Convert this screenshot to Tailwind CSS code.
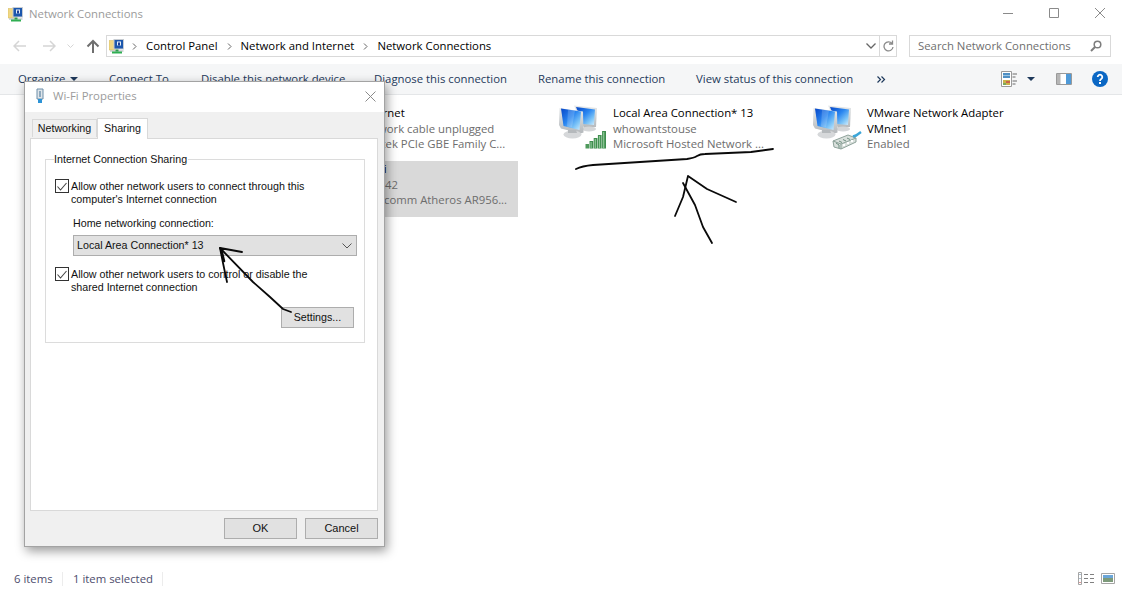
<!DOCTYPE html>
<html>
<head>
<meta charset="utf-8">
<script src="https://cdn.jsdelivr.net/npm/@tailwindcss/browser@4"></script>
</head>
<body class="bg-white">
<svg width="0" height="0" class="absolute">
  <defs>
    <linearGradient id="scr" x1="0" y1="0" x2="1" y2="1"><stop offset="0" stop-color="#0646c8"/><stop offset="0.45" stop-color="#2a86f0"/><stop offset="0.75" stop-color="#7cc4f7"/><stop offset="1" stop-color="#d5eefc"/></linearGradient>
    <linearGradient id="frm" x1="0" y1="0" x2="0" y2="1"><stop offset="0" stop-color="#e6e9eb"/><stop offset="1" stop-color="#b4b8bb"/></linearGradient>
    <symbol id="pcs" viewBox="0 0 56 52">
      <path d="M18 5.500L41 8l-1 19-12 1z" fill="url(#frm)"/>
      <path d="M20 7l19 2.500-1 15.500-11-1z" fill="url(#scr)"/>
      <ellipse cx="33" cy="29" rx="7" ry="2.500" fill="#d4d6d8"/>
      <path d="M3.500 8L27 11.500l.5 21-3 1L5 28.500 3 25z" fill="url(#frm)"/>
      <path d="M5 8.500l20 3-1.500 18.500-16-4z" fill="url(#scr)"/>
      <path d="M12 9.500l7 1-3 17-5-1z" fill="#fff" opacity=".18"/>
      <ellipse cx="16.500" cy="34.500" rx="9" ry="4" fill="#d6d8da"/>
      <path d="M12 30h8l1 3h-9z" fill="#b5b9bc"/>
    </symbol>
    <symbol id="net" viewBox="0 0 16 16">
      <path d="M.5 .5h10v15H.5z" fill="#fff" stroke="#9a9a9a"/>
      <path d="M2 2h7v5H2z" fill="#4f8fc4"/><path d="M2 4h7v1H2z" fill="#9cc4e0"/>
      <path d="M2 9h7v5H2z" fill="#c9b24a"/><path d="M2 12h3v2H2z" fill="#7da85b"/><path d="M5 10h4v2H5z" fill="#c8644a"/>
      <path d="M11.500 3h4.500M11.500 6h3M11.500 10h4.500M11.500 13h3" stroke="#6a6a6a"/>
    </symbol>
    <symbol id="cpl" viewBox="0 0 16 16">
      <path d="M0 2.500h5l1-1.500v11H0z" fill="#f0d784" stroke="#d3b658" stroke-width=".5"/>
      <path d="M4.500 1h10.500v10.500H4.500z" fill="#c7ccd2"/>
      <path d="M5.500 2h8.500v8.500H5.500z" fill="#1c57ad"/>
      <path d="M8 3.500h4v4H8z" fill="#e3edf8"/><path d="M9 4.500h2v3H9z" fill="#1c3f95"/>
      <path d="M1 12.500h13.500v1H1z" fill="#a9aeb2"/>
      <path d="M6.500 11.500h3v2h-3z" fill="#2f9a4c"/><path d="M3 13.500h10v2H3z" fill="#2fae52"/>
    </symbol>
  </defs>
</svg>

<div class="relative w-[1122px] h-[590px] overflow-hidden flex flex-col font-['Open_Sans','Noto_Sans',sans-serif] text-[11.35px] text-black">

  <!-- title bar -->
  <div class="h-[30px] flex items-center pl-[8px] pb-[2px] shrink-0">
    <svg class="w-[16px] h-[16px]"><use href="#cpl"/></svg>
    <span class="ml-[5px] text-[#9b9b9b]">Network Connections</span>
    <div class="ml-auto mr-[-1px] flex items-start h-[30px] mb-[-2px]">
      <svg class="w-[46px] h-[30px] text-[#8a8a8a] ml-[1px]" viewBox="0 0 46 30" fill="none" stroke="currentColor"><path d="M18 13.500h10"/></svg>
      <svg class="w-[46px] h-[30px] text-[#8a8a8a]" viewBox="0 0 46 30" fill="none" stroke="currentColor"><path d="M18.500 8.500h9v9h-9z"/></svg>
      <svg class="w-[46px] h-[30px] text-[#8a8a8a]" viewBox="0 0 46 30" fill="none" stroke="currentColor"><path d="M18 8l10 10M28 8L18 18"/></svg>
    </div>
  </div>

  <!-- address row -->
  <div class="h-[34px] flex items-center pb-[2px] shrink-0">
    <div class="w-[106px] h-full flex items-center pl-[13px] shrink-0">
      <svg class="w-[14px] h-[12px] text-[#d5d5d5]" viewBox="0 0 14 12" fill="none" stroke="currentColor" stroke-width="1.500"><path d="M13 6H1M6 1L1 6l5 5"/></svg>
      <svg class="w-[14px] h-[12px] ml-[15px] text-[#d5d5d5]" viewBox="0 0 14 12" fill="none" stroke="currentColor" stroke-width="1.500"><path d="M1 6h12M8 1l5 5-5 5"/></svg>
      <svg class="w-[7px] h-[5px] ml-[11px] text-[#d5d5d5]" viewBox="0 0 7 5" fill="none" stroke="currentColor"><path d="M.5 .5l3 3 3-3"/></svg>
      <svg class="w-[14px] h-[14px] ml-[12px] text-[#6f6f6f]" viewBox="0 0 14 14" fill="none" stroke="currentColor" stroke-width="2"><path d="M7 14V2M1.500 7.500L7 2l5.500 5.500"/></svg>
    </div>
    <div class="w-[791px] h-[22px] border border-[#d9d9d9] flex items-center shrink-0">
      <svg class="w-[16px] h-[16px] ml-[2px]"><use href="#cpl"/></svg>
      <svg class="w-[5px] h-[7px] ml-[7px] text-[#666]" viewBox="0 0 5 7" fill="none" stroke="currentColor"><path d="M1 .5l3 3-3 3"/></svg>
      <span class="ml-[9px]">Control Panel</span>
      <svg class="w-[5px] h-[7px] ml-[9px] text-[#666]" viewBox="0 0 5 7" fill="none" stroke="currentColor"><path d="M1 .5l3 3-3 3"/></svg>
      <span class="ml-[9px]">Network and Internet</span>
      <svg class="w-[5px] h-[7px] ml-[9px] text-[#666]" viewBox="0 0 5 7" fill="none" stroke="currentColor"><path d="M1 .5l3 3-3 3"/></svg>
      <span class="ml-[9px]">Network Connections</span>
      <svg class="w-[10px] h-[6px] ml-auto mr-[3px] text-[#666]" viewBox="0 0 10 6" fill="none" stroke="currentColor" stroke-width="1.300"><path d="M.5 .5L5 5 9.500 .5"/></svg>
      <div class="w-[17px] h-full border-l border-[#d9d9d9] flex items-center justify-center">
        <svg class="w-[11px] h-[12px] text-[#8a8a8a]" viewBox="0 0 11 12" fill="none" stroke="currentColor" stroke-width="1.300"><path d="M9 3.500A4.500 4.500 0 1 0 10 7M9.500 .5v3.500H6"/></svg>
      </div>
    </div>
    <div class="ml-[12px] w-[202px] h-[22px] border border-[#d9d9d9] flex items-center pl-[8px] pr-[8px] shrink-0 text-[#6f6f6f]">
      <span>Search Network Connections</span>
      <svg class="w-[12px] h-[12px] ml-auto text-[#7d7d7d]" viewBox="0 0 12 12" fill="none" stroke="currentColor" stroke-width="1.500"><circle cx="7.500" cy="4.500" r="3.300"/><path d="M5 7l-4 4" stroke-width="2"/></svg>
    </div>
  </div>

  <!-- command bar -->
  <div class="h-[31px] bg-[#f5f6f7] border-b border-[#e4e6e8] flex items-center shrink-0 text-[#1e395b]">
    <span class="ml-[18px] w-[91px] flex items-center gap-[5px]">Organize <svg class="w-[8px] h-[4px]" viewBox="0 0 8 4"><path d="M0 0h8L4 4z" fill="#1e395b"/></svg></span>
    <span class="w-[92px]">Connect To</span>
    <span class="w-[173px]">Disable this network device</span>
    <span class="w-[164px]">Diagnose this connection</span>
    <span class="w-[158px]">Rename this connection</span>
    <span class="w-[181px]">View status of this connection</span>
    <svg class="w-[9px] h-[7px]" viewBox="0 0 9 7" fill="none" stroke="#1e395b" stroke-width="1.200"><path d="M.5 .5l3 3-3 3M4.500 .5l3 3-3 3"/></svg>
    <svg class="w-[16px] h-[16px] ml-[115px]"><use href="#net"/></svg>
    <svg class="w-[8px] h-[4px] ml-[10px]" viewBox="0 0 8 4"><path d="M0 0h8L4 4z" fill="#1e395b"/></svg>
    <svg class="w-[16px] h-[12px] ml-[21px]" viewBox="0 0 16 12"><path d="M.5 .5h15v11H.5z" fill="#fff" stroke="#9a9a9a"/><path d="M1 1h3.500v10H1z" fill="#b5b5b5"/><path d="M10 1h5v10h-5z" fill="#4f9ad8"/></svg>
    <svg class="w-[16px] h-[16px] ml-[20px]" viewBox="0 0 16 16"><circle cx="8" cy="8" r="8" fill="#0a67c4"/><path d="M5.700 6a2.300 2.300 0 1 1 3.500 2c-.8.500-1.200.9-1.200 2" fill="none" stroke="#fff" stroke-width="1.800"/><path d="M7 11h2v2H7z" fill="#fff"/></svg>
  </div>

  <!-- items -->
  <div class="flex-1 pl-[305px] pt-[10px] grid grid-cols-[254px_254px_254px] auto-rows-[56px] content-start text-[#6d6d6d] leading-[15.500px]">
    <div class="flex pl-[54px]">
      <div><div class="text-black">Ethernet</div><div>Network cable unplugged</div><div>Realtek PCIe GBE Family C...</div></div>
    </div>
    <div class="flex">
      <div class="relative w-[54px] h-[50px] shrink-0">
        <svg class="absolute left-[-3px] top-[-5px] w-[56px] h-[52px]"><use href="#pcs"/></svg>
        <svg class="absolute left-[-3px] top-[-5px] w-[56px] h-[52px]" viewBox="0 0 56 52"><path d="M29.500 44h3.500v4.500h-3.500z" fill="#4f9a5c"/><path d="M33.500 41h3.700v7.500h-3.700zM37.700 38h3.700v10.500h-3.700zM41.900 35h3.700v13.500h-3.700zM46.100 31h3.900v17.500h-3.900z" fill="#3f8d4e"/><path d="M34.500 42h1.200v6h-1.200zM38.700 39h1.200v9h-1.200zM42.900 36h1.200v12h-1.200zM47.100 32h1.200v16h-1.200z" fill="#8cc896"/></svg>
      </div>
      <div><div class="text-black">Local Area Connection* 13</div><div>whowantstouse</div><div>Microsoft Hosted Network ...</div></div>
    </div>
    <div class="flex">
      <div class="relative w-[54px] h-[50px] shrink-0">
        <svg class="absolute left-[-3px] top-[-5px] w-[56px] h-[52px]"><use href="#pcs"/></svg>
        <svg class="absolute left-[-3px] top-[-5px] w-[56px] h-[52px]" viewBox="0 0 56 52"><path d="M23 41l15-6 8 3v4l-15 7-7-2z" fill="#d9e0dc" stroke="#8ea29a"/><path d="M23 41l8 3 15-6M31 44v5" fill="none" stroke="#8ea29a"/><path d="M26 43l3 2v3M29 41l3 1.500M33 39.500l3 1.500M37 38l3 1.500" fill="none" stroke="#6f8f80"/><path d="M33 44h2v2h-2zM37 42h2v2h-2zM41 40h2v2h-2z" fill="#fff"/><path d="M43 36.500l3-1 5-3.500" fill="none" stroke="#3da6d8" stroke-width="2.500"/></svg>
      </div>
      <div class="w-[150px]"><div class="text-black">VMware Network Adapter VMnet1</div><div>Enabled</div></div>
    </div>
    <div class="bg-[#d9d9d9] w-[213px] flex pl-[54px]">
      <div><div class="text-black tracking-[0.5px]">Wi-Fi</div><div>HP-A42</div><div>Qualcomm Atheros AR956...</div></div>
    </div>
  </div>

  <!-- status -->
  <div class="h-[23px] flex items-center pl-[14px] shrink-0 text-[#4d4d6d]">
    <span class="w-[48px]">6 items</span>
    <span class="w-px h-[14px] bg-[#ececec]"></span>
    <span class="ml-[10px] w-[89px]">1 item selected</span>
    <span class="w-px h-[14px] bg-[#ececec]"></span>
    <svg class="ml-auto w-[17px] h-[13px]" viewBox="0 0 17 13"><path d="M.5 .5h3v12h-3z" fill="#fff" stroke="#a5a5a5"/><path d="M1.500 2h1v1h-1zM1.500 6h1v1h-1z" fill="#5b7f9f"/><path d="M1.500 10h1v1h-1z" fill="#c03030"/><path d="M6 2.500h4M12 2.500h4M6 6.500h4M12 6.500h4M6 10.500h4M12 10.500h4" stroke="#808080"/></svg>
    <svg class="ml-[6px] mr-[7px] w-[14px] h-[11px]" viewBox="0 0 14 11"><path d="M.5 .5h13v10H.5z" fill="#fff" stroke="#a5a5a5" stroke-width="1"/><path d="M2 2h10v3H2z" fill="#6aa5d8"/><path d="M2 5h10v4H2z" fill="#7d9a7a"/></svg>
  </div>

  <!-- dialog -->
  <div class="absolute left-[24px] top-[81px] w-[361px] h-[466px] bg-[#f0f0f0] border border-[#a3a3a3] shadow-[2px_4px_10px_rgba(0,0,0,0.4)] flex flex-col font-['Liberation_Sans',sans-serif] text-[10.7px] text-[#111]">
    <div class="h-[30px] bg-white flex items-center pl-[9px] pr-[8px] pb-[2px] shrink-0 font-['Open_Sans',sans-serif] text-[11.35px]">
      <svg class="w-[12px] h-[16px]" viewBox="0 0 12 16"><path d="M3 1h6v10H3z" fill="#dfe5ea" stroke="#6d8ea8"/><path d="M5 3h2v6H5z" fill="#8fa9bd"/><path d="M4 11h4v4H4z" fill="#2d93d6"/></svg>
      <span class="ml-[7px] text-[#9b9b9b]">Wi-Fi Properties</span>
      <svg class="ml-auto w-[11px] h-[11px] text-[#8a8a8a]" viewBox="0 0 11 11" fill="none" stroke="currentColor"><path d="M.5 .5l10 10M10.500 .5l-10 10"/></svg>
    </div>
    <div class="flex items-end pl-[7px] h-[26px] shrink-0 relative z-10">
      <div class="w-[65px] h-[18px] bg-[#f0f0f0] border border-b-0 border-[#d9d9d9] flex items-center justify-center mb-px">Networking</div>
      <div class="w-[51px] h-[21px] bg-white border border-b-0 border-[#d9d9d9] flex items-center justify-center -mb-px pb-[2px]">Sharing</div>
    </div>
    <div class="mx-[5px] w-[348px] h-[373px] bg-white border border-[#d9d9d9] pl-[14px] pt-[14px] shrink-0">
      <fieldset class="w-[320px] h-[190px] border border-[#dcdcdc]">
        <legend class="ml-[8px] pr-[1px] leading-[12px] -mt-[1px]">Internet Connection Sharing</legend>
        <label class="flex ml-[9px] mt-[15px]">
          <span class="w-[14px] h-[14px] border border-[#333] flex items-center justify-center shrink-0 mt-[-1px]"><svg class="w-[10px] h-[9px]" viewBox="0 0 10 9" fill="none" stroke="#444" stroke-width="1.100"><path d="M.5 4.500L3.500 8 9.500 1"/></svg></span>
          <span class="ml-[2px] leading-[13px] w-[270px]">Allow other network users to connect through this computer's Internet connection</span>
        </label>
        <div class="ml-[27px] mt-[11px] leading-[13px]">Home networking connection:</div>
        <div class="ml-[27px] mt-[5px] w-[284px] h-[21px] bg-[#e1e1e1] border border-[#adadad] flex items-center pl-[3px] pr-[4px]">
          <span>Local Area Connection* 13</span>
          <svg class="ml-auto w-[10px] h-[6px] text-[#555]" viewBox="0 0 10 6" fill="none" stroke="currentColor"><path d="M.5 .5L5 5 9.500 .5"/></svg>
        </div>
        <label class="flex ml-[9px] mt-[12px]">
          <span class="w-[14px] h-[14px] border border-[#333] flex items-center justify-center shrink-0 mt-[-1px]"><svg class="w-[10px] h-[9px]" viewBox="0 0 10 9" fill="none" stroke="#444" stroke-width="1.100"><path d="M.5 4.500L3.500 8 9.500 1"/></svg></span>
          <span class="ml-[2px] leading-[13px] w-[270px]">Allow other network users to control or disable the shared Internet connection</span>
        </label>
        <div class="flex justify-end mr-[10px] mt-[13px]">
          <button class="w-[73px] h-[21px] bg-[#e1e1e1] border border-[#adadad]">Settings...</button>
        </div>
      </fieldset>
    </div>
    <div class="flex justify-end gap-[8px] pr-[6px] pt-[7px]">
      <button class="w-[73px] h-[21px] bg-[#e1e1e1] border border-[#adadad] text-[11px]">OK</button>
      <button class="w-[73px] h-[21px] bg-[#e1e1e1] border border-[#adadad] text-[11px]">Cancel</button>
    </div>
  </div>

  <!-- hand-drawn annotations -->
  <svg class="absolute left-0 top-0 w-[1122px] h-[590px] pointer-events-none" viewBox="0 0 1122 590" fill="none" stroke="#0a0a0a" stroke-width="1.800" stroke-linecap="round" stroke-linejoin="round">
    <path d="M576 169q6-3 17-4l47-3 47-3q7-1 10-3t8-2l46-2 22-3"/>
    <path d="M675 216l8-19 5-21 19 13 29 13"/>
    <path d="M683 183l12 22 8 22 9 16"/>
    <path d="M291 312l-8-3-13-12-17-15-33-34 22 4"/>
    <path d="M220 248l3 15 4 19"/>
    <path d="M221 249l3 12" stroke-width="2.500"/>
  </svg>
</div>
</body>
</html>
